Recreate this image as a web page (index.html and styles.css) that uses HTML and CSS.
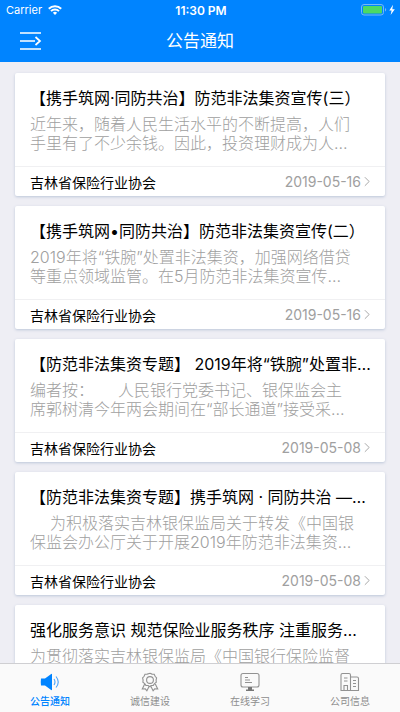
FILE: index.html
```html
<!DOCTYPE html>
<html lang="zh-CN">
<head>
<meta charset="utf-8">
<meta name="viewport" content="width=device-width, initial-scale=1">
<title>公告通知</title>
<link rel="stylesheet" href="styles.css">
</head>
<body>
<header class="header">
  <div class="status">
    <div class="status-left">
      <span>Carrier</span>
      <svg width="14" height="10" viewBox="0 0 14 10" fill="none" stroke="#fff" stroke-width="2"><path d="M.8 3.7a8.8 8.8 0 0 1 12.4 0M3 6.1a5.7 5.7 0 0 1 8 0"/><path d="M7 10 4.9 7.8a3 3 0 0 1 4.2 0z" fill="#fff" stroke="none"/></svg>
    </div>
    <span class="clock">11:30 PM</span>
    <div class="status-right">
      <svg width="35" height="12" viewBox="0 0 35 12"><rect x=".5" y=".5" width="22" height="10.500" rx="2.500" fill="none" stroke="#75b9f5"/><rect x="2" y="2" width="19" height="7.500" rx="1" fill="#4cd964"/><path d="M24 4c1.600.5 1.600 3 0 3.600z" fill="#75b9f5"/><path d="M32 .8 28.300 6.400h2.300L29.600 11l4.200-5.800h-2.500z" fill="#fff"/></svg>
    </div>
  </div>
  <div class="nav">
    <button class="menu" aria-label="菜单">
      <svg width="22" height="20" viewBox="0 0 22 20" fill="none" stroke="#fff" stroke-width="1.700"><path d="M0 2h21M0 10h15M0 18h21M15.500 6l4.500 4-4.500 4"/></svg>
    </button>
    <h1>公告通知</h1>
  </div>
</header>
<main class="list">
  <article class="card">
    <div class="card-body">
      <h2>【携手筑网·同防共治】防范非法集资宣传(三）</h2>
      <p>近年来，随着人民生活水平的不断提高，人们<br>手里有了不少余钱。因此，投资理财成为人…</p>
    </div>
    <a class="card-foot" href="#"><span>吉林省保险行业协会</span><time>2019-05-16</time><svg class="chevron" viewBox="0 0 7 12"><path d="m1 1 5 5-5 5"/></svg></a>
  </article>
  <article class="card">
    <div class="card-body">
      <h2>【携手筑网•同防共治】防范非法集资宣传(二）</h2>
      <p>2019年将“铁腕”处置非法集资，加强网络借贷<br>等重点领域监管。在5月防范非法集资宣传…</p>
    </div>
    <a class="card-foot" href="#"><span>吉林省保险行业协会</span><time>2019-05-16</time><svg class="chevron" viewBox="0 0 7 12"><path d="m1 1 5 5-5 5"/></svg></a>
  </article>
  <article class="card">
    <div class="card-body">
      <h2>【防范非法集资专题】 2019年将“铁腕”处置非…</h2>
      <p>编者按：&#12288;&#12288;人民银行党委书记、银保监会主<br>席郭树清今年两会期间在“部长通道”接受采…</p>
    </div>
    <a class="card-foot" href="#"><span>吉林省保险行业协会</span><time>2019-05-08</time><svg class="chevron" viewBox="0 0 7 12"><path d="m1 1 5 5-5 5"/></svg></a>
  </article>
  <article class="card">
    <div class="card-body">
      <h2>【防范非法集资专题】携手筑网 · 同防共治 —…</h2>
      <p><span class="indent"></span>为积极落实吉林银保监局关于转发《中国银<br>保监会办公厅关于开展2019年防范非法集资…</p>
    </div>
    <a class="card-foot" href="#"><span>吉林省保险行业协会</span><time>2019-05-08</time><svg class="chevron" viewBox="0 0 7 12"><path d="m1 1 5 5-5 5"/></svg></a>
  </article>
  <article class="card">
    <div class="card-body">
      <h2>强化服务意识 规范保险业服务秩序 注重服务…</h2>
      <p>为贯彻落实吉林银保监局《中国银行保险监督</p>
    </div>
  </article>
</main>
<nav class="tabs">
  <a class="tab active" href="#">
    <svg width="20" height="20" viewBox="0 0 20 20" fill="none"><path d="M1 6.500h4L11.200 2q.8-.5.8.5v15q0 1-.8.5L5 13.500H1Q.5 10 1 6.500z" fill="#0084ff"/><path d="M14 7q2 3 0 6M16 4.500q4.500 5.500 0 11" stroke="#4aa3fb" stroke-width="1.100"/></svg>
    <span>公告通知</span>
  </a>
  <a class="tab" href="#">
    <svg width="20" height="20" viewBox="0 0 20 20" fill="none" stroke="#929292" stroke-width="1.100"><path d="M10 1.300l2 .8 2.200.2.9 2 1.500 1.600-.5 2.200.2 2.200-1.800 1.300-1.200 1.800-2.200.1L10 14.700l-1.900-1.200-2.200-.1-1.200-1.800-1.800-1.300.2-2.200-.5-2.200 1.500-1.600.9-2 2.200-.2z"/><circle cx="10" cy="8" r="3.400"/><path d="M4.700 12 2.300 17l3-.2 1.600 2L9.300 14M15.300 12l2.400 5-3-.2-1.600 2-2.400-4.800"/></svg>
    <span>诚信建设</span>
  </a>
  <a class="tab" href="#">
    <svg width="20" height="20" viewBox="0 0 20 20" fill="none" stroke="#929292" stroke-width="1.100"><rect x="1" y="1.500" width="18" height="13.500" rx="2"/><path d="M5 5.500h3M5 8h5M5 10.500h7"/><path d="M8 15h4v2.500h2V19H6v-1.500h2z" fill="#777" stroke="none"/></svg>
    <span>在线学习</span>
  </a>
  <a class="tab" href="#">
    <svg width="20" height="20" viewBox="0 0 20 20" fill="none" stroke="#929292" stroke-width="1.100"><path d="M1 18.500V3q0-1.500 1.500-1.500H9q1.500 0 1.500 1.500v15.500zM10.500 5H17q1.500 0 1.500 1.500v12h-8M4 6h3.500M4 9h3.500M4 18.500v-5h3.500v5M13 8.500h3M13 11.500h3M13 14.500h3"/></svg>
    <span>公司信息</span>
  </a>
</nav>
</body>
</html>
```
FILE: styles.css
```css
* { box-sizing: border-box; }

body {
  margin: 0;
  height: 100vh;
  display: flex;
  flex-direction: column;
  overflow: hidden;
  background: #eeeef4;
  color: #000;
  font-family: Inter, "Noto Sans CJK SC", sans-serif;
}

h1, h2, p { margin: 0; }
a { color: inherit; text-decoration: none; }
svg { display: block; }

.header { background: #0084ff; color: #fff; }

.status {
  display: grid;
  grid-template-columns: 1fr auto 1fr;
  align-items: center;
  height: 20px;
  padding: 0 4px 0 6px;
  font-size: 11px;
}
.status-left { display: flex; align-items: center; gap: 6px; }
.status-right { justify-self: end; }
.clock { font-size: 12px; font-weight: 600; }

.nav {
  display: grid;
  grid-template-columns: 1fr auto 1fr;
  align-items: center;
  height: 42px;
  padding: 0 20px;
}
.menu { justify-self: start; padding: 0; border: 0; background: none; }
.nav h1 { font-size: 17px; font-weight: 400; line-height: 24px; }

.list {
  flex: 1;
  min-height: 0;
  overflow: hidden;
  display: flex;
  flex-direction: column;
  gap: 10px;
  padding: 11px 15px 0;
}

.card {
  flex: none;
  background: #fff;
  border-radius: 2px;
  box-shadow: 0 1px 3px #bcc6d8;
}
.card-body { padding: 14px 0 13px 15px; }
.card h2 {
  overflow: hidden;
  font-size: 16px;
  font-weight: 400;
  line-height: 22px;
  white-space: nowrap;
}
.card p {
  margin-top: 6px;
  color: #a0a0a0;
  font-size: 16px;
  font-weight: 300;
  line-height: 19px;
  white-space: nowrap;
}
.indent { display: inline-block; width: 20px; }

.card-foot {
  display: flex;
  align-items: center;
  height: 30px;
  padding: 0 15px;
  border-top: 1px solid #f0f0f2;
  font-size: 14px;
}
.card-foot time { margin-left: auto; color: #a0a0a0; }
.chevron {
  width: 6px;
  height: 11px;
  margin-left: 3px;
  fill: none;
  stroke: #999;
}

.tabs {
  display: grid;
  grid-template-columns: repeat(4, 1fr);
  height: 49px;
  border-top: 1px solid #cfcfd2;
  background: #fafafa;
}
.tab {
  display: flex;
  flex-direction: column;
  align-items: center;
  gap: 2px;
  padding-top: 8px;
  color: #8e8e8e;
  font-size: 10px;
  line-height: 14px;
}
.active { color: #0084ff; font-weight: 500; }
```
